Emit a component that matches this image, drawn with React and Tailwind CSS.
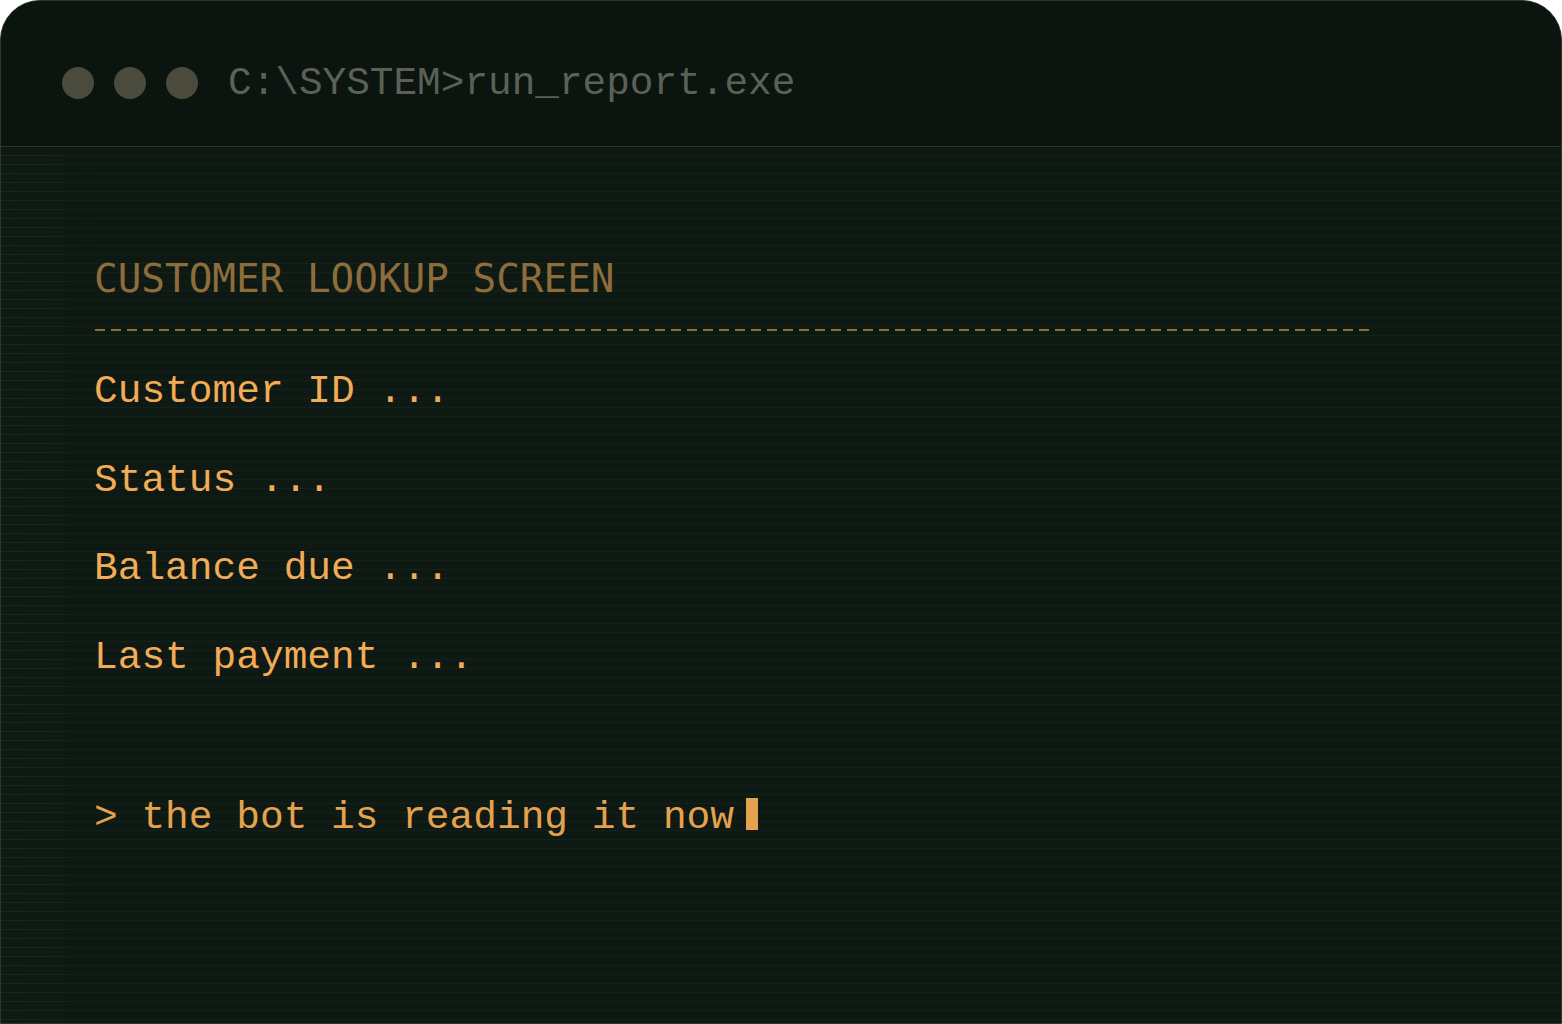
export default function App() {
  const mono = { fontFamily: '"Liberation Mono", "DejaVu Sans Mono", monospace' };
  const dj = { fontFamily: '"DejaVu Sans Mono", "Liberation Mono", monospace' };
  const rows = ["Customer ID ...", "Status ...", "Balance due ...", "Last payment ..."];
  return (
    <div className="w-full h-[1024px] bg-white overflow-hidden">
      <div className="relative w-[1562px] h-[1024px] rounded-t-[40px] border border-[#2c3a25] overflow-hidden flex flex-col bg-[#0f1913]">
        <div className="h-[146px] shrink-0 bg-[#0b140e] border-b border-[#2c3a25] flex items-center pl-[61px] pt-[18px]">
          <div className="flex gap-5">
            <div className="w-8 h-8 rounded-full bg-[#4a4b3d]" />
            <div className="w-8 h-8 rounded-full bg-[#4a4b3d]" />
            <div className="w-8 h-8 rounded-full bg-[#4a4b3d]" />
          </div>
          <div className="ml-[30px] text-[39.4px] leading-none text-[#5b6157] mt-[2px]" style={mono}>
            C:\SYSTEM&gt;run_report.exe
          </div>
        </div>
        <div className="relative flex-1 bg-[repeating-linear-gradient(to_bottom,#0f1913_0px,#0f1913_8px,#142119_8px,#142119_9px)]">
          <div className="absolute left-0 top-0 bottom-0 w-[90px] bg-[repeating-linear-gradient(to_bottom,transparent_0px,transparent_8px,#1d2b1f_8px,#1d2b1f_9px)] [mask-image:linear-gradient(to_right,black,transparent)] opacity-70" />
          <div className="relative pl-[93px] pt-[112px]">
            <div className="text-[39.3px] leading-none text-[#8c6d3b]" style={dj}>
              CUSTOMER LOOKUP SCREEN
            </div>
            <div className="mt-[31px] ml-[1px] w-[1276px] h-[2px] bg-[repeating-linear-gradient(to_right,#8c6d3b_0px,#8c6d3b_10px,transparent_10px,transparent_16px)]" />
            <div className="mt-[41px] flex flex-col gap-[49px]">
              {rows.map((r) => (
                <div key={r} className="text-[39.5px] leading-none text-[#f2ab56] whitespace-pre" style={mono}>
                  {r}
                </div>
              ))}
            </div>
            <div className="mt-[121px] flex items-start text-[39.5px] leading-none text-[#e4a24f] whitespace-pre" style={mono}>
              <span>&gt; the bot is reading it now</span>
              <span className="ml-[12px] w-[12px] h-[32px] bg-[#e4a24f]" />
            </div>
          </div>
        </div>
      </div>
    </div>
  );
}
